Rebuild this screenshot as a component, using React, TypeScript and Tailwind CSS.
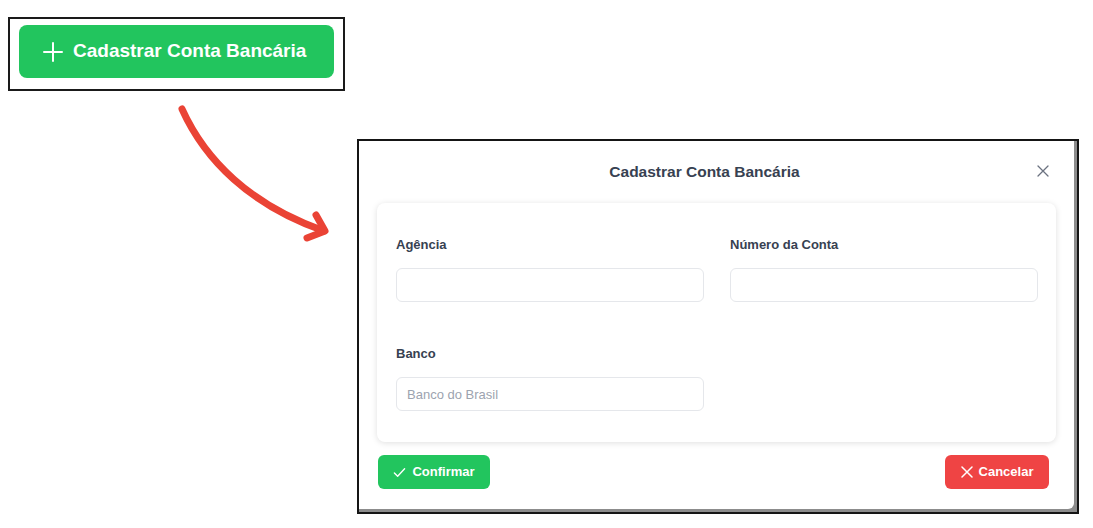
import React from "react";

const font = { fontFamily: '"Liberation Sans", Arial, sans-serif' };

function Field({ label, placeholder }: { label: string; placeholder?: string }) {
  return (
    <div className="flex flex-col">
      <label className="text-[13px] leading-[20px] font-bold text-[#374151] mb-[13px]">{label}</label>
      <input
        placeholder={placeholder}
        className="h-[34px] w-[308px] rounded-md border border-[#e5e7eb] bg-white px-[10px] text-[13px] text-[#374151] placeholder:text-[#9ca3af] outline-none"
        style={font}
      />
    </div>
  );
}

export default function App() {
  return (
    <div className="bg-white w-[1093px] h-[528px] overflow-hidden pt-[17px]" style={font}>
      <div className="ml-2 w-[337px] h-[74px] border-2 border-[#1a1a1a] pl-[9px] pt-[6px]">
        <button className="w-[315px] h-[53px] rounded-lg bg-[#22c55e] flex items-center gap-[10px] pl-[24px] text-white text-[19px] font-bold">
          <svg width="20" height="20" viewBox="0 0 20 20" fill="none" stroke="white" strokeWidth="2" strokeLinecap="round">
            <path d="M10 1v18M1 10h18" />
          </svg>
          <span>Cadastrar Conta Bancária</span>
        </button>
      </div>
      <div className="flex mt-[9px]">
        <svg width="357" height="150" viewBox="0 100 357 150" className="shrink-0" fill="none" stroke="#ea4335" strokeWidth="7" strokeLinecap="round" strokeLinejoin="round">
          <path d="M182 109 C 205 160, 250 205, 324 231" />
          <path d="M316 215 L325 231 L307 238" />
        </svg>
        <div className="mt-[39px] w-[722px] h-[375px] border-2 border-[#151515] bg-[#8c8c8c] flex">
          <div className="flex-1 mr-[3px] mb-[3px] bg-white rounded-br-[6px] flex flex-col">
            <div className="relative h-[62px] pt-[19px] pr-[24px] text-center">
              <span className="text-[15.5px] leading-[20px] font-bold text-[#374151]">Cadastrar Conta Bancária</span>
              <svg className="absolute right-[25px] top-[24px]" width="12" height="12" viewBox="0 0 12 12" fill="none" stroke="#6b7280" strokeWidth="1.3" strokeLinecap="round">
                <path d="M1 1l10 10M11 1L1 11" />
              </svg>
            </div>
            <div className="mx-[18px] h-[239px] rounded-lg bg-white shadow-[0_1px_6px_rgba(0,0,0,0.13)] pl-[19px] pt-[32px]">
              <div className="grid grid-cols-[308px_308px] gap-x-[26px] gap-y-[42px]">
                <Field label="Agência" />
                <Field label="Número da Conta" />
                <Field label="Banco" placeholder="Banco do Brasil" />
              </div>
            </div>
            <div className="flex justify-between pl-[19px] pr-[25px] mt-[13px]">
              <button className="h-[34px] w-[112px] rounded-md bg-[#22c55e] text-white text-[13px] font-bold flex items-center justify-center gap-[6px]">
                <svg width="13" height="13" viewBox="0 0 14 14" fill="none" stroke="white" strokeWidth="1.5" strokeLinecap="round" strokeLinejoin="round">
                  <path d="M1.5 7.5l3.5 3.5 7.5-8" />
                </svg>
                Confirmar
              </button>
              <button className="h-[34px] w-[104px] rounded-md bg-[#ef4444] text-white text-[13px] font-bold flex items-center justify-center gap-[6px]">
                <svg width="12" height="12" viewBox="0 0 12 12" fill="none" stroke="white" strokeWidth="1.5" strokeLinecap="round">
                  <path d="M1 1l10 10M11 1L1 11" />
                </svg>
                Cancelar
              </button>
            </div>
          </div>
        </div>
      </div>
    </div>
  );
}
